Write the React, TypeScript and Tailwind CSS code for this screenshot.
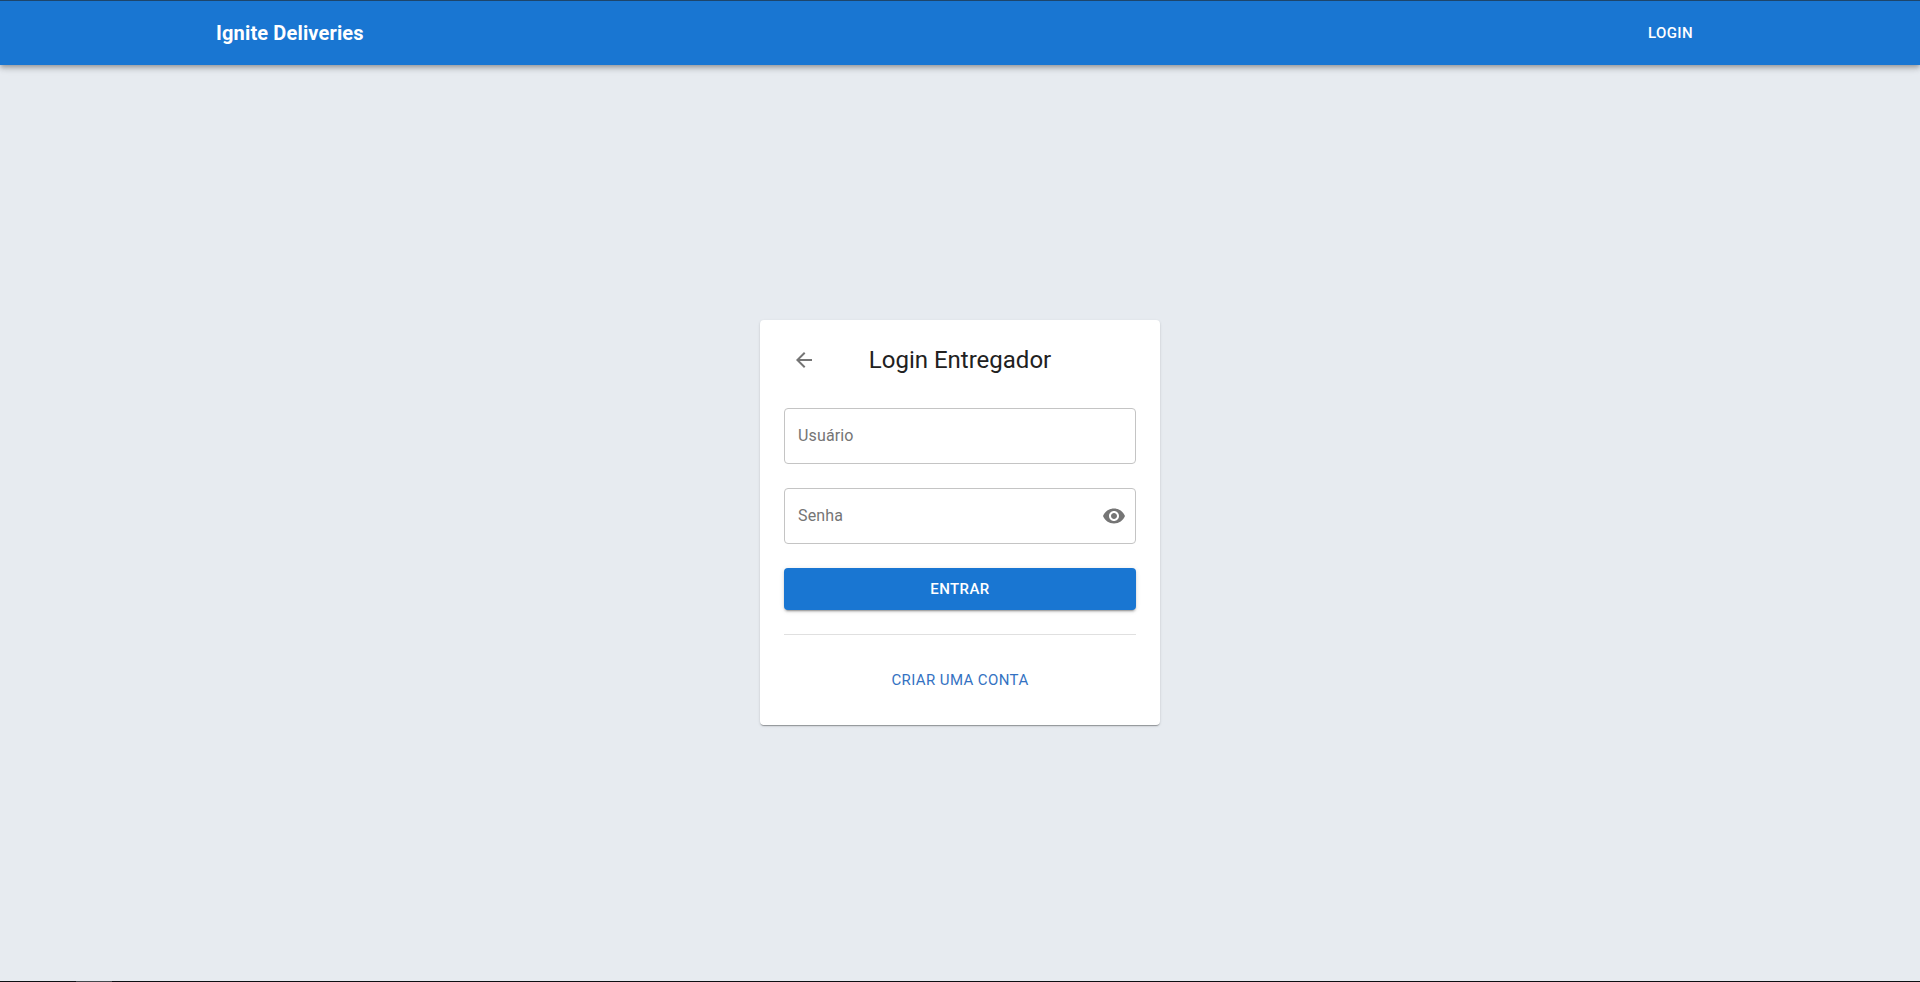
import React from "react";

function Header() {
  return (
    <header className="relative flex h-16 shrink-0 items-center justify-between bg-[#1976d2] px-54 text-white shadow-[0px_2px_4px_-1px_rgba(0,0,0,0.2),0px_4px_5px_0px_rgba(0,0,0,0.14),0px_1px_10px_0px_rgba(0,0,0,0.12)]">
      <h1 className="text-[20px] leading-8 font-bold tracking-[0.15px]">Ignite Deliveries</h1>
      <button className="px-[11px] py-2 text-[15px] leading-[26px] font-medium tracking-[0.4px] uppercase">
        Login
      </button>
    </header>
  );
}

function Field({ label, children }: { label: string; children?: React.ReactNode }) {
  return (
    <label className="flex h-14 items-center justify-between rounded border border-[#c4c4c4] pr-[9px] pl-[13px] text-base tracking-[0.15px] text-[#757575]">
      <span>{label}</span>
      {children}
    </label>
  );
}

export default function App() {
  return (
    <div className="flex h-[982px] flex-col overflow-hidden bg-[#e7ebf0] font-['Roboto',sans-serif]">
      <div className="relative z-10 h-px shrink-0 bg-[#1d456b]" />
      <Header />
      <main className="flex grow flex-col items-center pt-[255px]">
        <section className="h-[405px] w-[400px] rounded bg-white px-6 pt-5 shadow-[0px_2px_1px_-1px_rgba(0,0,0,0.2),0px_1px_1px_0px_rgba(0,0,0,0.14),0px_1px_3px_0px_rgba(0,0,0,0.12)]">
          <div className="grid h-10 grid-cols-[40px_1fr_40px] items-center">
            <button aria-label="Voltar" className="flex size-10 items-center justify-center text-[#757575]">
              <svg className="size-6" viewBox="0 0 24 24" fill="currentColor">
                <path d="M20 11H7.83l5.59-5.59L12 4l-8 8 8 8 1.41-1.41L7.83 13H20v-2z" />
              </svg>
            </button>
            <h2 className="text-center text-2xl text-[#212121]">Login Entregador</h2>
          </div>
          <form className="mt-7 flex flex-col gap-6">
            <Field label="Usuário" />
            <Field label="Senha">
              <svg className="size-6" viewBox="0 0 24 24" fill="currentColor">
                <path d="M12 4.5C7 4.5 2.73 7.61 1 12c1.73 4.39 6 7.5 11 7.5s9.27-3.11 11-7.5c-1.73-4.39-6-7.5-11-7.5zM12 17c-2.76 0-5-2.24-5-5s2.24-5 5-5 5 2.24 5 5-2.24 5-5 5zm0-8c-1.66 0-3 1.34-3 3s1.34 3 3 3 3-1.34 3-3-1.34-3-3-3z" />
              </svg>
            </Field>
            <button
              type="button"
              className="h-[42px] rounded bg-[#1976d2] text-[15px] font-medium tracking-[0.4px] text-white uppercase shadow-[0px_3px_1px_-2px_rgba(0,0,0,0.2),0px_2px_2px_0px_rgba(0,0,0,0.14),0px_1px_5px_0px_rgba(0,0,0,0.12)]"
            >
              Entrar
            </button>
          </form>
          <hr className="mt-6 border-[#e0e0e0]" />
          <div className="flex h-[90px] items-center justify-center">
            <a className="text-[15px] tracking-[0.4px] text-[#3472c2] uppercase">Criar uma conta</a>
          </div>
        </section>
      </main>
      <div className="flex h-px shrink-0 bg-[#0d0e13]">
        <div className="ml-[76px] w-9 bg-[#45474c]" />
      </div>
    </div>
  );
}
